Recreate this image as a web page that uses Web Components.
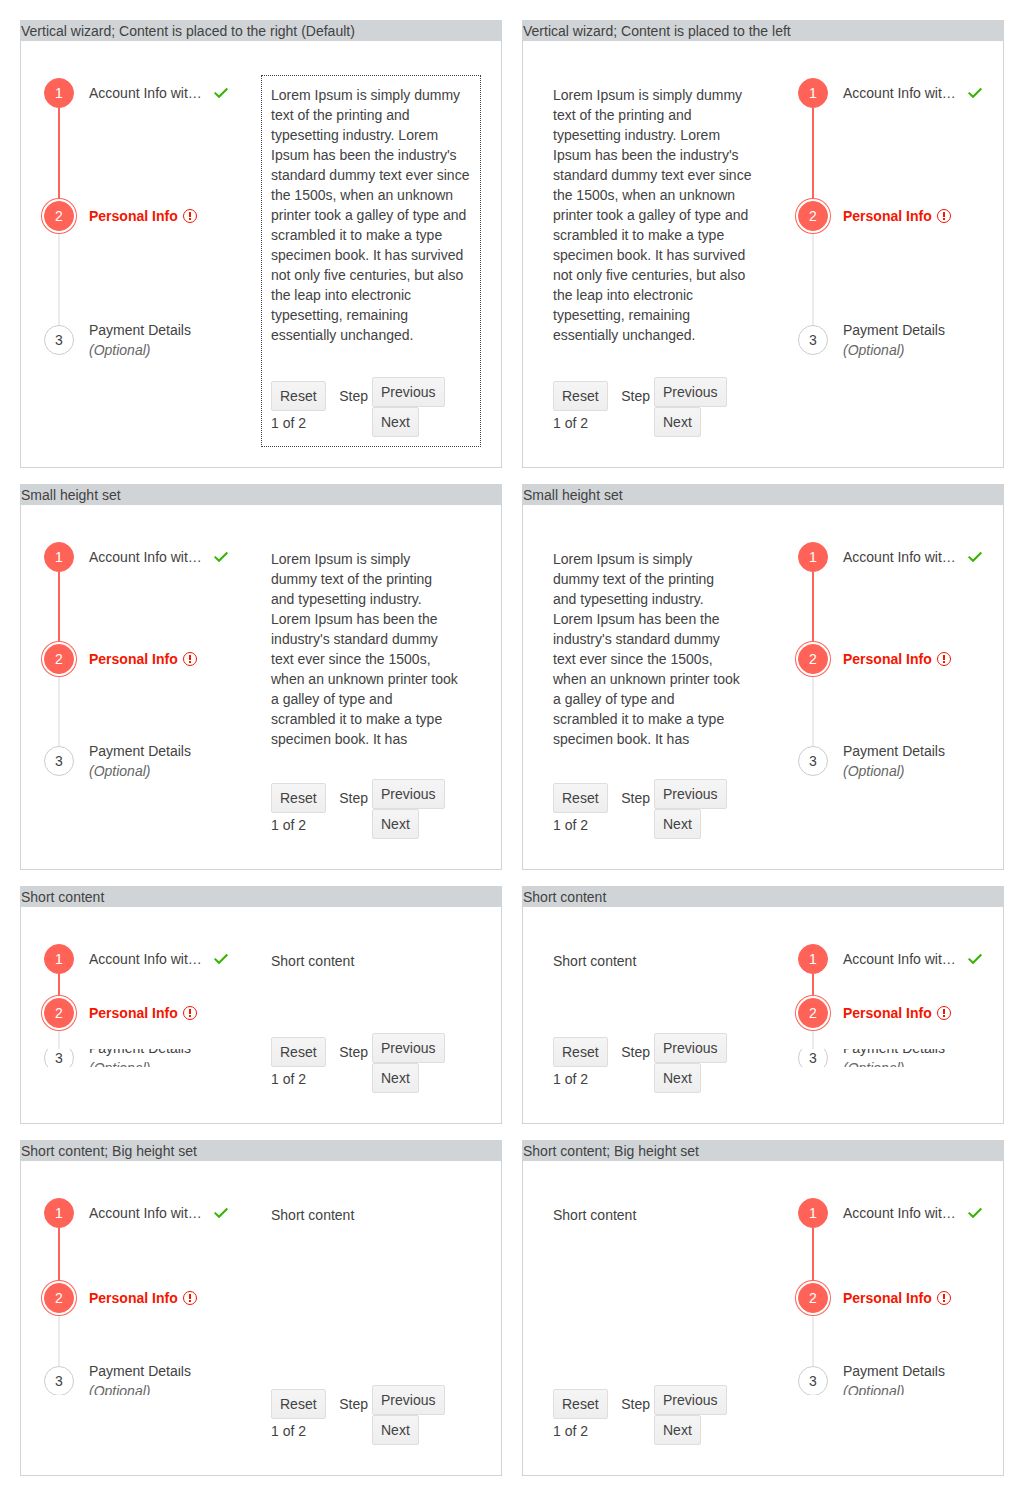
<!DOCTYPE html>
<html lang="en">
<head>
<meta charset="utf-8">
<title>Stepper with content</title>
<style>
body{margin:0;background:#fff;color:#424242;font:14px/20px "Liberation Sans",Arial,sans-serif}
</style>
</head>
<body>
<wizard-page></wizard-page>
<script>
const LONG = ["Lorem Ipsum is simply dummy","text of the printing and","typesetting industry. Lorem","Ipsum has been the industry's","standard dummy text ever since","the 1500s, when an unknown","printer took a galley of type and","scrambled it to make a type","specimen book. It has survived","not only five centuries, but also","the leap into electronic","typesetting, remaining","essentially unchanged."].join("\n");
const MEDIUM = ["Lorem Ipsum is simply","dummy text of the printing","and typesetting industry.","Lorem Ipsum has been the","industry's standard dummy","text ever since the 1500s,","when an unknown printer took","a galley of type and","scrambled it to make a type","specimen book. It has"].join("\n");

class StatusIcon extends HTMLElement {
  connectedCallback() {
    const ok = this.getAttribute("kind") === "ok";
    this.attachShadow({mode:"open"}).innerHTML = `
<style>:host{display:block;width:16px;height:16px;flex:none}svg{display:block}</style>
<svg width="16" height="16" viewBox="0 0 16 16" fill="none">${ok
  ? '<path d="M1.7 7.6 6 11.8 14.3 3.5" stroke="#37b400" stroke-width="2"/>'
  : '<circle cx="8" cy="8" r="6.5" stroke="#f31700"/><path d="M7 4h2v5H7zM7 10h2v2H7z" fill="#f31700"/>'}</svg>`;
  }
}
customElements.define("status-icon", StatusIcon);

class WizardStep extends HTMLElement {
  connectedCallback() {
    this.attachShadow({mode:"open"}).innerHTML = `
<style>
:host{display:block;height:30px;flex:none}
.row{display:flex;align-items:center;height:30px}
.dot{box-sizing:border-box;width:30px;height:30px;border-radius:50%;border:1px solid #ccc;background:#fff;display:flex;align-items:center;justify-content:center;margin-right:15px;flex:none}
:host([state=done]) .dot,:host([state=current]) .dot{background:#ff6358;border-color:#ff6358;color:#fff}
:host([state=current]) .dot{box-shadow:0 0 0 2px #fff,0 0 0 3px #ff6358}
:host([state=current]){position:relative;z-index:1;color:#f31700;font-weight:700}
:host([state=current]) .dot{font-weight:400}
:host([clip]){overflow:hidden}
.label{white-space:nowrap;flex:none}
::slotted(em){display:block;color:#666}
status-icon{margin-left:4px}
:host([state=done]) status-icon{margin-left:11px}
</style>
<div class="row"><div class="dot">${this.getAttribute("num")}</div><div class="label"><slot></slot></div>${
  this.hasAttribute("icon") ? `<status-icon kind="${this.getAttribute("icon")}"></status-icon>` : ""}</div>`;
    if (this.hasAttribute("clip")) {
      const [h, top] = this.getAttribute("clip").split(" ");
      this.style.height = h + "px";
      this.shadowRoot.querySelector(".row").style.marginTop = top + "px";
    }
  }
}
customElements.define("wizard-step", WizardStep);

class WizardStepper extends HTMLElement {
  connectedCallback() {
    const [a, b] = this.getAttribute("tracks").split(" ");
    const clip = this.getAttribute("clip");
    this.attachShadow({mode:"open"}).innerHTML = `
<style>
:host{display:flex;flex-direction:column;width:185px;flex:none}
.track{width:2px;margin-left:14px;flex:none;background:#ebebeb}
.track.on{background:#ff6358}
</style>
<wizard-step num="1" state="done" icon="ok">Account Info wit…</wizard-step>
<div class="track on" style="height:${a}px"></div>
<wizard-step num="2" state="current" icon="error">Personal Info</wizard-step>
<div class="track" style="height:${b}px"></div>
<wizard-step num="3"${clip ? ` clip="${clip}"` : ""}>Payment Details<em>(Optional)</em></wizard-step>`;
  }
}
customElements.define("wizard-stepper", WizardStepper);

class WizardButton extends HTMLElement {
  connectedCallback() {
    this.attachShadow({mode:"open"}).innerHTML = `
<style>:host{display:block;box-sizing:border-box;height:30px;padding:4px 8px;border:1px solid #dedede;border-radius:2px;background:linear-gradient(#f5f5f5,#eee);white-space:nowrap}</style><slot></slot>`;
  }
}
customElements.define("wizard-button", WizardButton);

class WizardContent extends HTMLElement {
  connectedCallback() {
    this.attachShadow({mode:"open"}).innerHTML = `
<style>
:host{display:flex;flex-direction:column;justify-content:space-between;box-sizing:border-box;width:220px;flex:none;padding:9px;border:1px solid transparent}
:host([focused]){border:1px dotted #424242}
.text{white-space:pre}
.actions{display:flex;height:60px}
.left{width:101px;padding-top:4px}
.top{display:flex;align-items:center;justify-content:space-between;margin-right:4px}
.count{margin-top:2px}
.right{display:flex;flex-direction:column;align-items:flex-start}
.prev{width:73px}
</style>
<div class="text"><slot></slot></div>
<div class="actions">
  <div class="left"><div class="top"><wizard-button>Reset</wizard-button><span>Step</span></div><div class="count">1 of 2</div></div>
  <div class="right"><wizard-button class="prev">Previous</wizard-button><wizard-button>Next</wizard-button></div>
</div>`;
  }
}
customElements.define("wizard-content", WizardContent);

class WizardCard extends HTMLElement {
  connectedCallback() {
    const left = this.getAttribute("side") === "left";
    this.attachShadow({mode:"open"}).innerHTML = `
<style>
:host{display:flex;flex-direction:column;box-sizing:border-box;border:1px solid #d0d4d7}
h2{margin:0;font:inherit;background:#d0d4d7;height:20px;flex:none}
.body{flex:1;display:flex;padding:34px 20px 20px ${left ? 20 : 23}px;gap:${left ? 35 : 32}px}
wizard-stepper{margin-top:3px}
${left ? "wizard-content{order:-1}" : ""}
</style>
<h2>${this.getAttribute("heading")}</h2>
<div class="body">
  <wizard-stepper tracks="${this.getAttribute("tracks")}" clip="${this.getAttribute("clip") || ""}"></wizard-stepper>
  <wizard-content${this.hasAttribute("focused") ? " focused" : ""}><slot></slot></wizard-content>
</div>`;
  }
}
customElements.define("wizard-card", WizardCard);

class WizardPage extends HTMLElement {
  connectedCallback() {
    const rows = [
      ["Vertical wizard; Content is placed to the right (Default)", "Vertical wizard; Content is placed to the left", "93 94", "", LONG],
      ["Small height set", "Small height set", "72 72", "", MEDIUM],
      ["Short content", "Short content", "24 21", "18 -6", "Short content"],
      ["Short content; Big height set", "Short content; Big height set", "55 53", "29 0", "Short content"]
    ];
    this.attachShadow({mode:"open"}).innerHTML = `
<style>:host{display:grid;grid-template-columns:482px 482px;grid-template-rows:448px 386px 238px 336px;gap:16px 20px;padding:20px}</style>
${rows.map(([r, l, tracks, clip, text], i) =>
  `<wizard-card side="right" heading="${r}" tracks="${tracks}" clip="${clip}"${i ? "" : " focused"}>${text}</wizard-card>` +
  `<wizard-card side="left" heading="${l}" tracks="${tracks}" clip="${clip}">${text}</wizard-card>`).join("")}`;
  }
}
customElements.define("wizard-page", WizardPage);
</script>
</body>
</html>
